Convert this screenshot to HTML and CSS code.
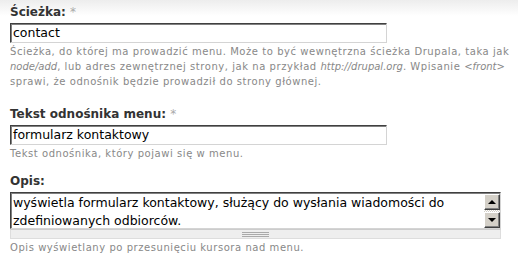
FILE: index.html
```html
<!DOCTYPE html>
<html lang="pl">
<head>
<meta charset="utf-8">
<title>Menu</title>
<link rel="stylesheet" href="styles.css">
</head>
<body>
<div class="form">
  <div class="item">
    <label class="label">Ścieżka: <span class="req">*</span></label>
    <div class="input">contact</div>
    <div class="desc">Ścieżka, do której ma prowadzić menu. Może to być wewnętrzna ścieżka Drupala, taka jak <em>node/add</em>, lub adres zewnętrznej strony, jak na przykład <em>http://drupal.org</em>. Wpisanie <em>&lt;front&gt;</em> sprawi, że odnośnik będzie prowadził do strony głównej.</div>
  </div>
  <div class="item">
    <label class="label">Tekst odnośnika menu: <span class="req">*</span></label>
    <div class="input">formularz kontaktowy</div>
    <div class="desc">Tekst odnośnika, który pojawi się w menu.</div>
  </div>
  <div class="item">
    <label class="label">Opis:</label>
    <div class="textarea">
      <div class="ta-text">wyświetla formularz kontaktowy, służący do wysłania wiadomości do zdefiniowanych odbiorców.</div>
      <div class="scrollbar">
        <div class="sb-btn"><span class="arrow-up"></span></div>
        <div class="sb-track"></div>
        <div class="sb-btn"><span class="arrow-down"></span></div>
      </div>
    </div>
    <div class="grippie"><span class="grip-lines"></span></div>
    <div class="desc">Opis wyświetlany po przesunięciu kursora nad menu.</div>
  </div>
</div>
</body>
</html>
```

FILE: styles.css
```css
html, body {
  margin: 0;
  padding: 0;
}
body {
  background: linear-gradient(#ededed 0, #ffffff 16px) no-repeat #fff;
  font-family: "DejaVu Sans", Verdana, sans-serif;
  width: 518px;
  height: 260px;
  overflow: hidden;
}
.form {
  padding: 3px 6px 0 10px;
}
.item {
  margin-bottom: 11px;
}
.item:first-child {
  margin-bottom: 16px;
}
.label {
  display: block;
  font-weight: bold;
  font-size: 12px;
  line-height: 18px;
  color: #333;
  margin-bottom: 2px;
}
.req {
  font-weight: normal;
  color: #aaa;
}
.input {
  box-sizing: border-box;
  width: 377px;
  height: 20px;
  border: 1px solid;
  border-color: #404040 #d4d4d4 #d4d4d4 #404040;
  box-shadow: inset 1px 1px 0 #808080;
  padding: 1px 0 0 2px;
  font-size: 12.5px;
  line-height: 16px;
  color: #000;
  background: #fff;
}
.desc {
  font-size: 10px;
  letter-spacing: 0.55px;
  line-height: 15px;
  color: #888;
  margin-top: 1px;
}
.desc em {
  font-style: italic;
  letter-spacing: 0;
}
.textarea {
  box-sizing: border-box;
  width: 491px;
  height: 37px;
  display: flex;
  border: 1px solid;
  border-color: #404040 #d4d4d4 #d4d4d4 #404040;
  box-shadow: inset 1px 1px 0 #808080;
  background: #fff;
}
.ta-text {
  flex: 1;
  padding: 1px 0 0 2px;
  font-size: 12.5px;
  line-height: 18px;
  color: #000;
  overflow: hidden;
}
.scrollbar {
  width: 16px;
  margin: 1px 0 0 0;
  display: flex;
  flex-direction: column;
}
.sb-btn {
  box-sizing: border-box;
  height: 16px;
  background: #d4d0c8;
  border: 1px solid;
  border-color: #ffffff #404040 #404040 #ffffff;
  box-shadow: inset -1px -1px 0 #808080;
  display: flex;
  align-items: center;
  justify-content: center;
}
.sb-track {
  flex: 1;
  background: repeating-conic-gradient(#d4d0c8 0 25%, #ffffff 0 50%) 0 0 / 2px 2px;
}
.arrow-up {
  width: 0;
  height: 0;
  border-left: 4px solid transparent;
  border-right: 4px solid transparent;
  border-bottom: 4px solid #000;
  margin-right: 1px;
}
.arrow-down {
  width: 0;
  height: 0;
  border-left: 4px solid transparent;
  border-right: 4px solid transparent;
  border-top: 4px solid #000;
  margin-right: 1px;
}
.grippie {
  box-sizing: border-box;
  width: 491px;
  height: 10px;
  background: #eee;
  border: 1px solid #ddd;
  border-top-color: #ccc;
  display: flex;
  justify-content: center;
  align-items: center;
}
.grip-lines {
  width: 27px;
  height: 5px;
  border-top: 1px solid #aaa;
  border-bottom: 1px solid #aaa;
  box-sizing: border-box;
  background: linear-gradient(transparent 1px, #aaa 1px, #aaa 2px, transparent 2px);
}
```
